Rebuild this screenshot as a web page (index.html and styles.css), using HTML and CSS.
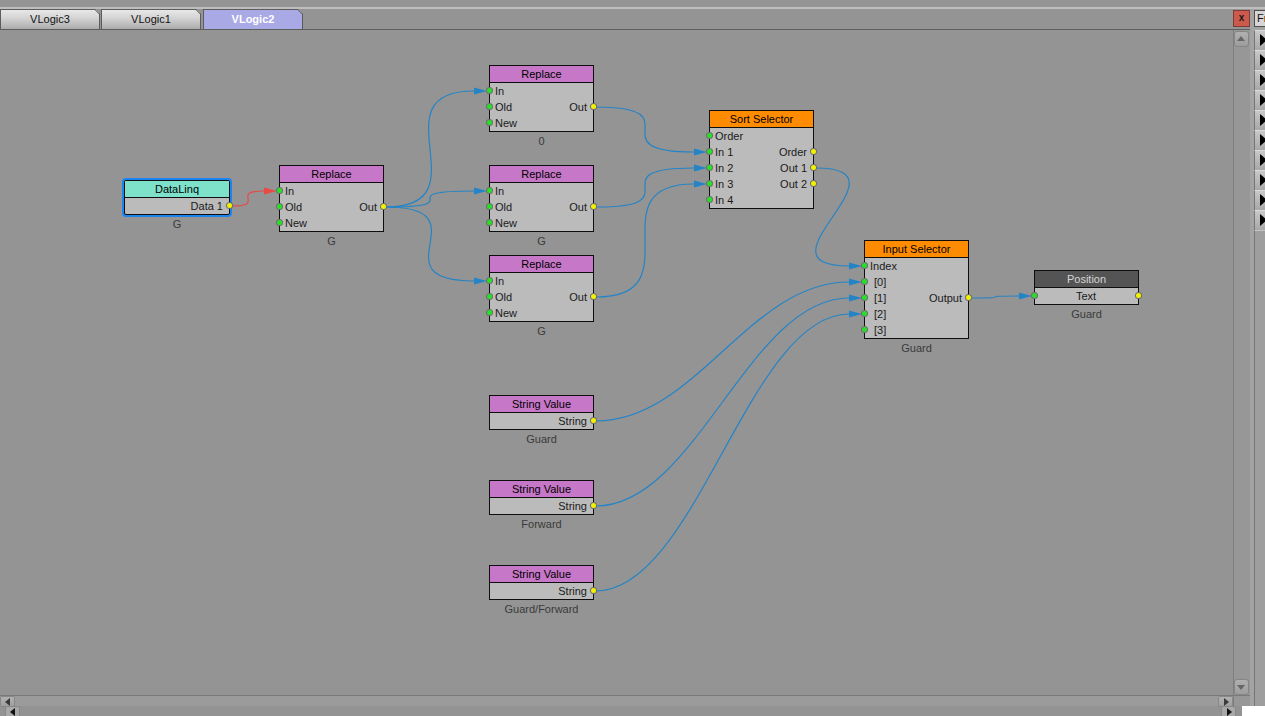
FILE: index.html
```html
<!DOCTYPE html>
<html>
<head>
<meta charset="utf-8">
<title>VLogic2</title>
<link rel="stylesheet" href="styles.css">
</head>
<body>
<div class="topgap"></div>
<div class="topline"></div>
<div class="main">
  <div class="editor">
    <div class="tabbar">
      <div class="tab t1">VLogic3</div>
      <div class="tab t2">VLogic1</div>
      <div class="tab active">VLogic2</div>
      <div class="tabfill"></div>
      <div class="close">x</div>
    </div>
    <div class="work">
      <div class="canvas">
        <svg class="wires" width="1233" height="665" viewBox="0 0 1233 665">
          <g fill="none" stroke="#2484c6" stroke-width="1.2">
            <path d="M386 177 C486 177 374 61 474 61"/>
            <path d="M386 177 C475 177 385 161 474 161"/>
            <path d="M386 177 C486 177 374 251 474 251"/>
            <path d="M596 77 C696 77 594 122 694 122"/>
            <path d="M596 177 C696 177 594 138 694 138"/>
            <path d="M596 267 C696 267 594 154 694 154"/>
            <path d="M816 138 C916 138 749 236 849 236"/>
            <path d="M971 268 C1019 268 971 266 1019 266"/>
            <path d="M596 391 C696 391 749 252 849 252"/>
            <path d="M596 476 C696 476 749 268 849 268"/>
            <path d="M596 561 C696 561 749 284 849 284"/>
          </g>
          <path d="M232 176 C267 176 229 161 264 161" fill="none" stroke="#e84a46" stroke-width="1.2"/>
          <g fill="#2484c6">
            <polygon points="474,57.5 487,61 474,64.5"/>
            <polygon points="474,157.5 487,161 474,164.5"/>
            <polygon points="474,247.5 487,251 474,254.5"/>
            <polygon points="694,118.5 707,122 694,125.5"/>
            <polygon points="694,134.5 707,138 694,141.5"/>
            <polygon points="694,150.5 707,154 694,157.5"/>
            <polygon points="849,232.5 862,236 849,239.5"/>
            <polygon points="849,248.5 862,252 849,255.5"/>
            <polygon points="849,264.5 862,268 849,271.5"/>
            <polygon points="849,280.5 862,284 849,287.5"/>
            <polygon points="1019,262.5 1032,266 1019,269.5"/>
          </g>
          <polygon points="264,157.5 277,161 264,164.5" fill="#e84a46"/>
        </svg>

        <div class="node teal sel n-dl">
          <div class="hd">DataLinq</div>
          <div class="row r"><span>Data 1</span><span class="po"></span></div>
          <div class="cap">G</div>
        </div>

        <div class="node purple n-r1">
          <div class="hd">Replace</div>
          <div class="row"><span class="pi"></span><span>In</span></div>
          <div class="row"><span class="pi"></span><span>Old</span><span>Out</span><span class="po"></span></div>
          <div class="row"><span class="pi"></span><span>New</span></div>
          <div class="cap">G</div>
        </div>

        <div class="node purple n-r2">
          <div class="hd">Replace</div>
          <div class="row"><span class="pi"></span><span>In</span></div>
          <div class="row"><span class="pi"></span><span>Old</span><span>Out</span><span class="po"></span></div>
          <div class="row"><span class="pi"></span><span>New</span></div>
          <div class="cap">0</div>
        </div>

        <div class="node purple n-r3">
          <div class="hd">Replace</div>
          <div class="row"><span class="pi"></span><span>In</span></div>
          <div class="row"><span class="pi"></span><span>Old</span><span>Out</span><span class="po"></span></div>
          <div class="row"><span class="pi"></span><span>New</span></div>
          <div class="cap">G</div>
        </div>

        <div class="node purple n-r4">
          <div class="hd">Replace</div>
          <div class="row"><span class="pi"></span><span>In</span></div>
          <div class="row"><span class="pi"></span><span>Old</span><span>Out</span><span class="po"></span></div>
          <div class="row"><span class="pi"></span><span>New</span></div>
          <div class="cap">G</div>
        </div>

        <div class="node orange n-sort">
          <div class="hd">Sort Selector</div>
          <div class="row"><span class="pi"></span><span>Order</span></div>
          <div class="row"><span class="pi"></span><span>In 1</span><span>Order</span><span class="po"></span></div>
          <div class="row"><span class="pi"></span><span>In 2</span><span>Out 1</span><span class="po"></span></div>
          <div class="row"><span class="pi"></span><span>In 3</span><span>Out 2</span><span class="po"></span></div>
          <div class="row"><span class="pi"></span><span>In 4</span></div>
        </div>

        <div class="node orange n-in">
          <div class="hd">Input Selector</div>
          <div class="row"><span class="pi"></span><span>Index</span></div>
          <div class="row"><span class="pi"></span><span class="ix">[0]</span></div>
          <div class="row"><span class="pi"></span><span class="ix">[1]</span><span>Output</span><span class="po"></span></div>
          <div class="row"><span class="pi"></span><span class="ix">[2]</span></div>
          <div class="row"><span class="pi"></span><span class="ix">[3]</span></div>
          <div class="cap">Guard</div>
        </div>

        <div class="node dark n-pos">
          <div class="hd">Position</div>
          <div class="row c"><span class="pi"></span><span>Text</span><span class="po"></span></div>
          <div class="cap">Guard</div>
        </div>

        <div class="node purple n-sv1">
          <div class="hd">String Value</div>
          <div class="row r"><span>String</span><span class="po"></span></div>
          <div class="cap">Guard</div>
        </div>

        <div class="node purple n-sv2">
          <div class="hd">String Value</div>
          <div class="row r"><span>String</span><span class="po"></span></div>
          <div class="cap">Forward</div>
        </div>

        <div class="node purple n-sv3">
          <div class="hd">String Value</div>
          <div class="row r"><span>String</span><span class="po"></span></div>
          <div class="cap">Guard/Forward</div>
        </div>
      </div>
      <div class="vscroll">
        <div class="sbtn up"></div>
        <div class="sbtn down"></div>
      </div>
    </div>
    <div class="hscroll">
      <div class="hrow upper">
        <div class="hbtn left"></div>
        <div class="htrack"></div>
        <div class="hbtn right"></div>
        <div class="hcorner"></div>
      </div>
      <div class="hrow lower">
        <div class="hbtn left b2"></div>
        <div class="htrack"></div>
        <div class="hbtn right b2"></div>
        <div class="hgap"></div>
        <div class="hwhite"></div>
      </div>
    </div>
  </div>
  <div class="side">
    <div class="side-inner">
      <div class="fr">Fr</div>
      <div class="sbrow"></div>
      <div class="sbrow"></div>
      <div class="sbrow"></div>
      <div class="sbrow"></div>
      <div class="sbrow"></div>
      <div class="sbrow"></div>
      <div class="sbrow"></div>
      <div class="sbrow"></div>
      <div class="sbrow"></div>
      <div class="sbrow"></div>
      <div class="side-rest"></div>
    </div>
    <div class="side-white"></div>
  </div>
</div>
</body>
</html>
```

FILE: styles.css
```css
* { box-sizing: content-box; }

body {
  margin: 0;
  width: 1265px;
  height: 716px;
  overflow: hidden;
  background: #949494;
  font: 11px "Liberation Sans", Arial, sans-serif;
  color: #111;
}

.topgap { height: 7px; }
.topline { height: 2px; background: #bebebe; }

.main { display: flex; height: 707px; }

.editor {
  width: 1250px;
  display: flex;
  flex-direction: column;
}

/* ---------- tabs ---------- */
.tabbar {
  height: 20px;
  border-bottom: 1px solid #5e5e5e;
  display: flex;
  align-items: flex-start;
}

.tab {
  position: relative;
  width: 98px;
  height: 19px;
  line-height: 19px;
  border: 1px solid #5c5c5c;
  border-bottom: none;
  text-align: center;
  color: #111;
  background: linear-gradient(#e8e8e8, #d2d2d2 45%, #acacac);
  clip-path: polygon(0 0, calc(100% - 5px) 0, 100% 5px, 100% 100%, 0 100%);
}
.tab::before {
  content: "";
  position: absolute;
  top: 1px;
  right: -2px;
  width: 8px;
  height: 1px;
  background: #5c5c5c;
  transform: rotate(45deg);
}
.t1 { margin-right: 1px; }
.t2 { margin-right: 2px; }
.tab.active {
  background: #a9a9e6;
  color: #fff;
  font-weight: bold;
}

.tabfill { flex: 1; }

.close {
  width: 15px;
  height: 15px;
  margin-top: 1px;
  margin-right: 0;
  border: 1px solid #7c3b33;
  background: #cc5a4c;
  color: #1a1a1a;
  font-weight: bold;
  font-size: 10px;
  line-height: 13px;
  text-align: center;
}

/* ---------- work area ---------- */
.work { display: flex; height: 665px; }

.canvas {
  position: relative;
  width: 1233px;
  height: 665px;
  overflow: hidden;
}

.wires { position: absolute; left: 0; top: 0; }

.vscroll {
  width: 16px;
  border-left: 1px solid #7e7e7e;
  background: #979797;
  display: flex;
  flex-direction: column;
  justify-content: space-between;
}

.sbtn {
  position: relative;
  width: 13px;
  height: 14px;
  margin: 1px 1px 0 0;
  border: 1px solid #858585;
  border-radius: 3px;
  background: linear-gradient(#b0b0b0, #9d9d9d);
}
.sbtn.down { margin: 0 1px 0 0; }
.sbtn::after {
  content: "";
  position: absolute;
  left: 2px;
  border-left: 4.5px solid transparent;
  border-right: 4.5px solid transparent;
}
.sbtn.up::after { top: 4px; border-bottom: 5px solid #666; }
.sbtn.down::after { top: 5px; border-top: 5px solid #666; }

/* ---------- bottom scroll ---------- */
.hscroll {
  height: 20px;
  border-top: 1px solid #7a7a7a;
}
.hrow { display: flex; height: 10px; }
.hrow.upper { background: #9b9b9b; }
.hrow.lower { background: #939393; }

.htrack { flex: 1; }

.hbtn {
  position: relative;
  width: 13px;
  height: 9px;
  border: 1px solid #888;
  border-radius: 2px;
  background: linear-gradient(#b2b2b2, #a0a0a0);
}
.hbtn.left { margin-left: 0; }
.hbtn.b2 { height: 10px; border-bottom: none; background: #a8a8a8; }
.hbtn.left.b2 { margin-left: 5px; }
.hbtn::after {
  content: "";
  position: absolute;
  top: 1px;
  border-top: 4px solid transparent;
  border-bottom: 4px solid transparent;
}
.hbtn.left::after { left: 4px; border-right: 5px solid #3a3a3a; }
.hbtn.right::after { left: 5px; border-left: 5px solid #3a3a3a; }
.hbtn.b2::after { border-right-color: #111; border-left-color: #111; }

.hcorner {
  width: 16px;
  border-left: 1px solid #7e7e7e;
  background: #979797;
}
.hrow.upper .hbtn.right { margin-right: 0; }
.hrow.lower .hbtn.right { margin-right: 6px; }
.hgap { width: 0; }
.hwhite { width: 8px; background: #fff; }

/* ---------- side panel ---------- */
.side {
  width: 15px;
  display: flex;
  flex-direction: column;
  background: #a3a3a3;
  overflow: hidden;
}
.side-inner {
  flex: 1;
  margin-left: 4px;
  display: flex;
  flex-direction: column;
}
.fr {
  height: 15px;
  margin-top: 1px;
  margin-bottom: 3px;
  border: 1px solid #4e4e4e;
  border-right: none;
  background: #d6d6d6;
  line-height: 15px;
  padding-left: 2px;
  color: #111;
  white-space: nowrap;
  overflow: hidden;
}
.sbrow {
  position: relative;
  height: 19px;
  border-top: 1px solid #dadada;
  border-left: 1px solid #767676;
  background: linear-gradient(#c8c8c8, #a8a8a8);
}
.sbrow::after {
  content: "";
  position: absolute;
  left: 5px;
  top: 3px;
  border-top: 6px solid transparent;
  border-bottom: 6px solid transparent;
  border-left: 7px solid #000;
}
.side-rest {
  flex: 1;
  border-left: 1px solid #767676;
  border-top: 1px solid #c4c4c4;
  background: #9e9e9e;
}
.side-white { height: 10px; background: #fff; }

/* ---------- nodes ---------- */
.node {
  position: absolute;
  width: 103px;
  border: 1px solid #0e0e0e;
  background: #bbbbbb;
}
.node .hd {
  height: 16px;
  line-height: 16px;
  border-bottom: 1px solid #0e0e0e;
  text-align: center;
  color: #000;
  white-space: nowrap;
}
.purple .hd { background: #c677c7; }
.orange .hd { background: #ff8c00; }
.dark .hd { background: #545454; color: #d6d6d6; }
.teal .hd { background: #7ee2cb; }

.sel {
  box-shadow: 0 0 0 2px #1c84f0;
  border-radius: 2px;
}

.row {
  position: relative;
  height: 16px;
  line-height: 16px;
  display: flex;
  justify-content: space-between;
  padding: 0 6px 0 5px;
  color: #1a1a1a;
  white-space: nowrap;
}
.row.r { justify-content: flex-end; }
.row.c { justify-content: center; }
.ix { padding-left: 4px; }

.pi, .po {
  position: absolute;
  top: 5px;
  width: 5px;
  height: 5px;
  border-radius: 50%;
  box-shadow: 0 0 0 1px #6e6e6e;
}
.pi { left: -3px; background: #27e027; }
.po { right: -3px; background: #f2f200; }

.cap {
  position: absolute;
  left: -20px;
  right: -20px;
  top: 100%;
  margin-top: 3px;
  line-height: 14px;
  text-align: center;
  color: #3a3a3a;
  white-space: nowrap;
}

.n-dl { left: 124px; top: 150px; width: 104px; }
.n-r1 { left: 279px; top: 135px; }
.n-r2 { left: 489px; top: 35px; }
.n-r3 { left: 489px; top: 135px; }
.n-r4 { left: 489px; top: 225px; }
.n-sort { left: 709px; top: 80px; }
.n-in { left: 864px; top: 210px; }
.n-pos { left: 1034px; top: 240px; }
.n-sv1 { left: 489px; top: 365px; }
.n-sv2 { left: 489px; top: 450px; }
.n-sv3 { left: 489px; top: 535px; }
```
